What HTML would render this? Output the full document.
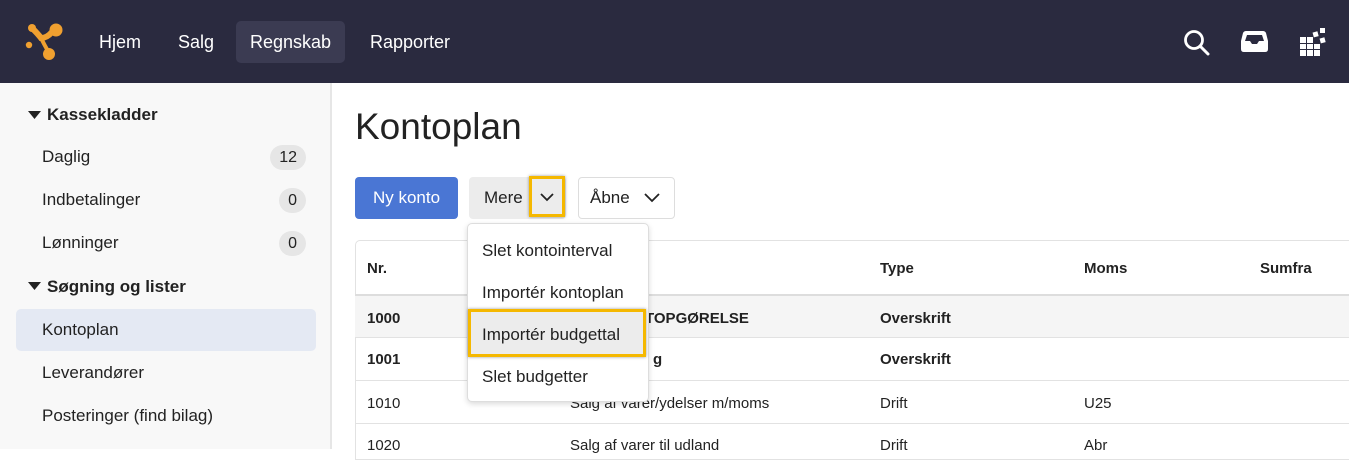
<!DOCTYPE html><html><head><meta charset="utf-8"><style>
*{box-sizing:border-box;margin:0;padding:0}
body{width:1349px;height:449px;overflow:hidden;font-family:"Liberation Sans",Arial,sans-serif;background:#fff;position:relative;color:#222}
.hdr{position:absolute;left:0;top:0;width:1349px;height:83px;background:#2a2a3f}
.nav{position:absolute;top:21px;height:42px;line-height:42px;color:#fff;font-size:18px;padding:0 14px;border-radius:5px}
.side{position:absolute;left:0;top:83px;width:332px;height:366px;background:#f8f8f8;border-right:2px solid #e6e6e6}
.sh{position:absolute;left:28px;font-weight:bold;font-size:17px}
.si{position:absolute;left:16px;width:300px;height:42px;line-height:42px;padding-left:26px;font-size:17px;border-radius:5px}
.badge{position:absolute;right:10px;top:9px;height:25px;line-height:25px;background:#e6e6e6;border-radius:13px;padding:0 9px;font-size:16px}
.abs{position:absolute}
.row{position:absolute;left:355px;width:994px;border-top:1px solid #e2e2e2;font-size:15px}
.row span{position:absolute}
.mi{position:absolute;left:482px;font-size:17px}
</style></head><body>
<div class="hdr">
<svg class="abs" style="left:0;top:0" width="80" height="80" viewBox="0 0 80 80" fill="#f0a030"><circle cx="32" cy="28" r="4"/><circle cx="56" cy="30" r="6.5"/><circle cx="29" cy="45" r="3.2"/><circle cx="49" cy="54" r="6"/><path d="M32 28 Q38 34 41 38 Q47 38 52 32" stroke="#f0a030" stroke-width="6" fill="none" stroke-linecap="round"/><path d="M41 38 Q45 46 48 51" stroke="#f0a030" stroke-width="4" fill="none"/></svg>
<div class="nav" style="left:85px">Hjem</div>
<div class="nav" style="left:164px">Salg</div>
<div class="nav" style="left:236px;background:#3b3b52">Regnskab</div>
<div class="nav" style="left:356px">Rapporter</div>
<svg class="abs" style="left:1183px;top:28px" width="30" height="28"><circle cx="11" cy="12" r="8.5" stroke="#fff" stroke-width="2.8" fill="none"/><path d="M17 18 L25 26" stroke="#fff" stroke-width="3" stroke-linecap="round"/></svg>
<svg class="abs" style="left:1240px;top:29px" width="30" height="26"><path d="M6 2 H23 Q25 2 26 4 L28 12 V20 Q28 23 25 23 H4 Q1 23 1 20 V12 L3 4 Q4 2 6 2 Z" fill="#fff"/><path d="M5 12 H10 L12 15 H17 L19 12 H24 L22 6 H7 Z" fill="#2a2a3f"/></svg>
<svg class="abs" style="left:1299px;top:27px" width="30" height="30" fill="#fff"><rect x="1" y="10" width="6" height="6"/><rect x="8" y="10" width="6" height="6"/><rect x="1" y="17" width="6" height="5"/><rect x="8" y="17" width="6" height="5"/><rect x="15" y="17" width="6" height="5"/><rect x="1" y="23" width="6" height="6"/><rect x="8" y="23" width="6" height="6"/><rect x="15" y="23" width="6" height="6"/><rect x="14" y="5" width="5" height="5" transform="rotate(-15 16 7)"/><rect x="21" y="1" width="5" height="5"/><rect x="21" y="11" width="5" height="5" transform="rotate(-15 23 13)"/></svg>
</div>
<div class="side">
<svg class="abs" style="left:28px;top:28px" width="14" height="10"><path d="M0 0 H13 L6.5 8Z" fill="#222"/></svg>
<div class="sh" style="left:47px;top:22px">Kassekladder</div>
<div class="si" style="top:53px">Daglig<span class="badge">12</span></div>
<div class="si" style="top:96px">Indbetalinger<span class="badge">0</span></div>
<div class="si" style="top:139px">Lønninger<span class="badge">0</span></div>
<svg class="abs" style="left:28px;top:199px" width="14" height="10"><path d="M0 0 H13 L6.5 8Z" fill="#222"/></svg>
<div class="sh" style="left:47px;top:194px">Søgning og lister</div>
<div class="si" style="top:226px;background:#e4e9f3">Kontoplan</div>
<div class="si" style="top:269px">Leverandører</div>
<div class="si" style="top:312px">Posteringer (find bilag)</div>
</div>
<div class="abs" style="left:355px;top:106px;font-size:37px;color:#222">Kontoplan</div>
<div class="abs" style="left:355px;top:177px;width:103px;height:42px;background:#4a76d4;border-radius:4px;color:#fff;font-size:17px;line-height:42px;text-align:center">Ny konto</div>
<div class="abs" style="left:469px;top:177px;width:97px;height:42px;background:#ececec;border-radius:4px;font-size:17px;line-height:42px;padding-left:15px">Mere</div>
<div class="abs" style="left:529px;top:176px;width:36px;height:41px;border:3px solid #f5b800;box-shadow:0 0 3px rgba(0,0,0,.4)"></div>
<svg class="abs" style="left:540px;top:193px" width="14" height="9"><path d="M1 1 L7 7 L13 1" stroke="#222" stroke-width="1.8" fill="none"/></svg>
<div class="abs" style="left:578px;top:177px;width:97px;height:42px;border:1px solid #ddd;border-radius:4px;font-size:17px;line-height:40px;padding-left:11px">Åbne</div>
<svg class="abs" style="left:644px;top:193px" width="16" height="10"><path d="M1 1 L8 8 L15 1" stroke="#222" stroke-width="1.8" fill="none"/></svg>
<div class="abs" style="left:355px;top:240px;width:1000px;height:220px;border:1px solid #e2e2e2;border-radius:5px 0 0 0"></div>
<div class="row" style="top:240px;height:54px;border-top:none;font-weight:bold"><span style="left:12px;top:20px">Nr.</span><span style="left:525px;top:20px">Type</span><span style="left:729px;top:20px">Moms</span><span style="left:905px;top:20px">Sumfra</span></div>
<div class="row" style="top:294px;height:43px;background:#f5f5f5;border-top:2px solid #ddd;font-weight:bold"><span style="left:12px;top:14px">1000</span><span style="left:290px;top:14px">TOPGØRELSE</span><span style="left:525px;top:14px">Overskrift</span></div>
<div class="row" style="top:337px;height:43px;font-weight:bold"><span style="left:12px;top:13px">1001</span><span style="left:298px;top:13px">g</span><span style="left:525px;top:13px">Overskrift</span></div>
<div class="row" style="top:380px;height:43px"><span style="left:12px;top:14px">1010</span><span style="left:215px;top:14px">Salg af varer/ydelser m/moms</span><span style="left:525px;top:14px">Drift</span><span style="left:729px;top:14px">U25</span></div>
<div class="row" style="top:423px;height:43px"><span style="left:12px;top:13px">1020</span><span style="left:215px;top:13px">Salg af varer til udland</span><span style="left:525px;top:13px">Drift</span><span style="left:729px;top:13px">Abr</span></div>
<div class="abs" style="left:467px;top:223px;width:182px;height:179px;background:#fff;border:1px solid #ddd;border-radius:5px;box-shadow:0 2px 6px rgba(0,0,0,.15)"></div>
<div class="mi" style="top:241px">Slet kontointerval</div>
<div class="mi" style="top:283px">Importér kontoplan</div>
<div class="abs" style="left:468px;top:309px;width:178px;height:48px;background:#ececec;border:3px solid #f5b800;box-shadow:0 0 3px rgba(0,0,0,.4)"></div>
<div class="mi" style="top:325px">Importér budgettal</div>
<div class="mi" style="top:367px">Slet budgetter</div>
</body></html>
